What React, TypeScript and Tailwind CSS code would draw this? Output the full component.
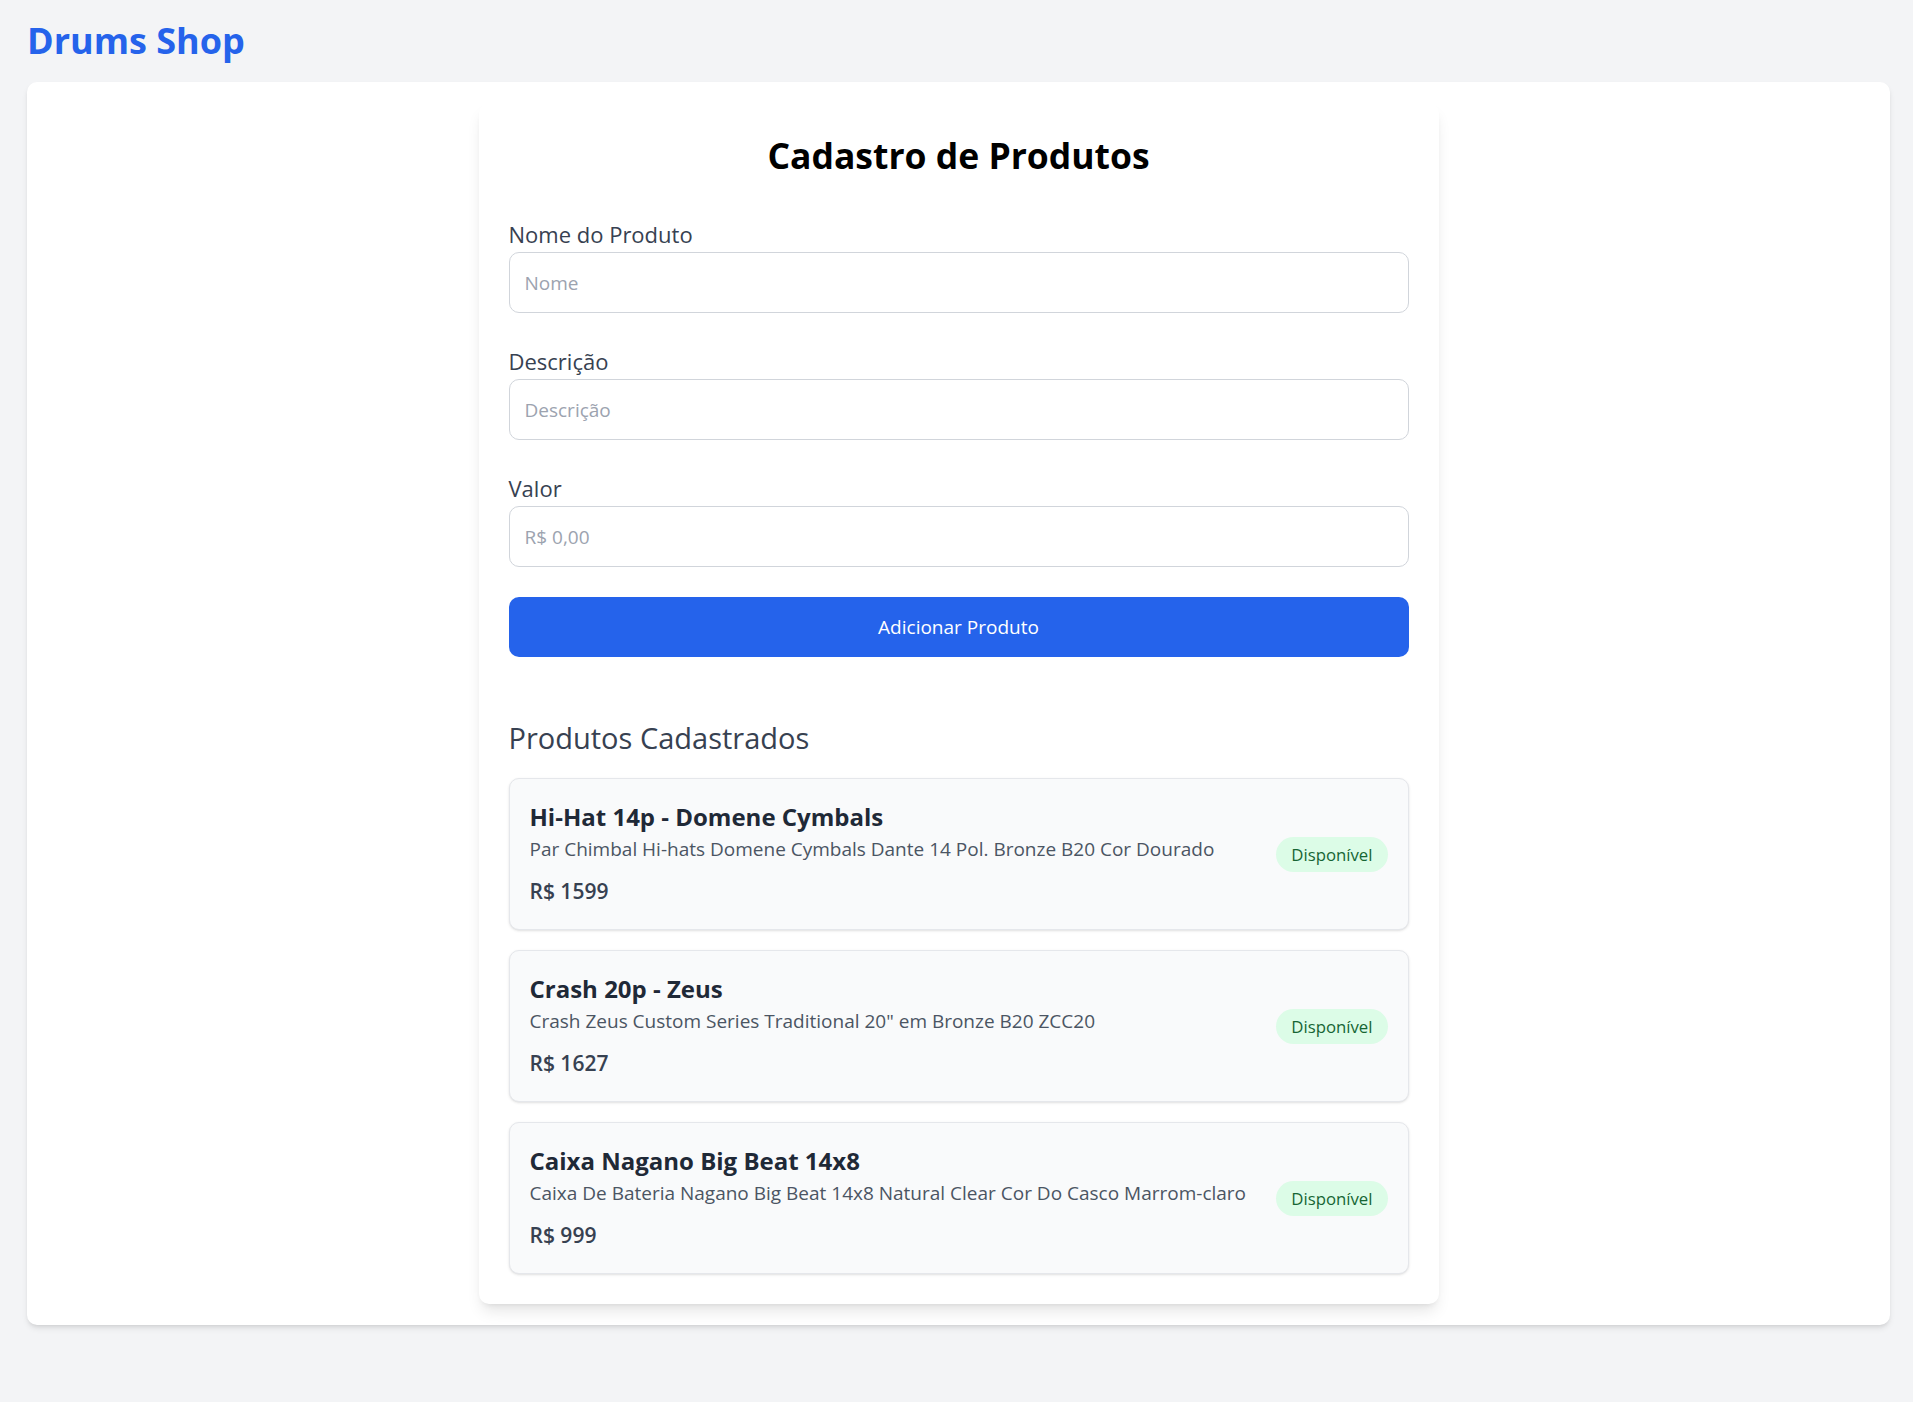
import React from "react";

const products = [
  {
    name: "Hi-Hat 14p - Domene Cymbals",
    desc: "Par Chimbal Hi-hats Domene Cymbals Dante 14 Pol. Bronze B20 Cor Dourado",
    price: "R$ 1599",
  },
  {
    name: "Crash 20p - Zeus",
    desc: 'Crash Zeus Custom Series Traditional 20" em Bronze B20 ZCC20',
    price: "R$ 1627",
  },
  {
    name: "Caixa Nagano Big Beat 14x8",
    desc: "Caixa De Bateria Nagano Big Beat 14x8 Natural Clear Cor Do Casco Marrom-claro",
    price: "R$ 999",
  },
];

function Field({ label, placeholder, first }: { label: string; placeholder: string; first?: boolean }) {
  return (
    <div className={first ? "" : "mt-[31px]"}>
      <label className="block text-[22px] leading-[35px] text-[#374151]">{label}</label>
      <input
        className="block w-full h-[61px] px-[15px] border border-[#d1d5db] rounded-[10px] text-[19px] text-[#111827] placeholder:text-[#9ca3af] bg-white outline-none"
        placeholder={placeholder}
      />
    </div>
  );
}

export default function App() {
  return (
    <div className="min-h-[1402px] bg-[#f3f4f6] font-['Open_Sans',sans-serif] pl-[27px] pr-[23px]">
      <h1 className="pt-[18px] text-[36px] leading-[45px] font-bold text-[#2563eb] mb-[19px]">Drums Shop</h1>
      <div className="bg-white rounded-[10px] shadow-md p-[21px]">
        <div className="max-w-[960px] mx-auto bg-white rounded-[10px] shadow-lg p-[30px]">
          <h2 className="text-center text-[35.5px] leading-[45px] font-bold text-black mb-[39px]">Cadastro de Produtos</h2>
          <Field label="Nome do Produto" placeholder="Nome" first />
          <Field label="Descrição" placeholder="Descrição" />
          <Field label="Valor" placeholder="R$ 0,00" />
          <button className="mt-[30px] w-full h-[60px] bg-[#2563eb] text-white text-[19px] rounded-[10px]">
            Adicionar Produto
          </button>
          <h3 className="mt-[61px] text-[29px] leading-[40px] text-[#374151] mb-[20px]">Produtos Cadastrados</h3>
          <div className="flex flex-col gap-[20px]">
            {products.map((p) => (
              <div
                key={p.name}
                className="flex items-center justify-between gap-[20px] border border-[#e5e7eb] bg-[#f9fafb] rounded-[10px] shadow-sm p-[20px]"
              >
                <div>
                  <div className="text-[24px] leading-[35px] font-bold text-[#1f2937]">{p.name}</div>
                  <div className="text-[19px] leading-[30px] text-[#4b5563] whitespace-nowrap">{p.desc}</div>
                  <div className="mt-[10px] text-[21px] leading-[35px] font-semibold text-[#374151]">{p.price}</div>
                </div>
                <span className="shrink-0 px-[15px] py-[5px] rounded-full bg-[#dcfce7] text-[#166534] text-[16.75px] leading-[25px]">
                  Disponível
                </span>
              </div>
            ))}
          </div>
        </div>
      </div>
    </div>
  );
}
